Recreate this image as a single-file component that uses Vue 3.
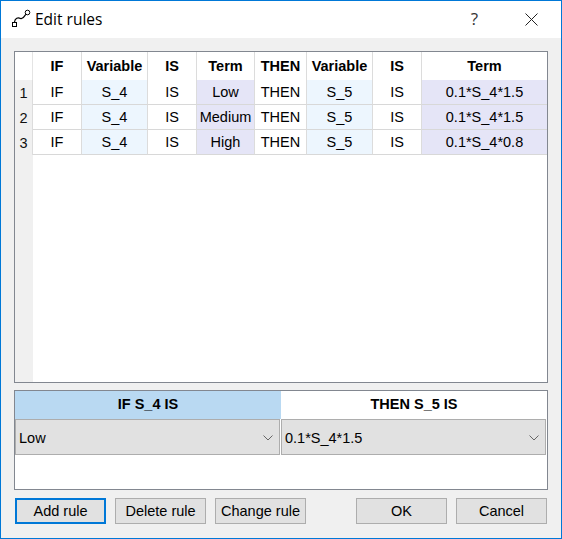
<template>
  <div class="dialog">
    <!-- title bar -->
    <div class="titlebar">
      <svg class="app-icon" width="20" height="20" viewBox="0 0 20 20">
        <rect x="1.500" y="13.500" width="4" height="4" fill="none" stroke="#000" />
        <circle cx="16.500" cy="3.500" r="2.300" fill="none" stroke="#000" />
        <path d="M3.500 13 C4 9 7 8 9.500 9.500 C12 10.500 13 8 14.800 5.200" fill="none" stroke="#000" stroke-width="1.200" />
      </svg>
      <span class="title">Edit rules</span>
      <span class="help">?</span>
      <svg class="close" width="13" height="13" viewBox="0 0 13 13">
        <path d="M0.500 0.500 L12.500 12.500 M12.500 0.500 L0.500 12.500" stroke="#222" fill="none" />
      </svg>
    </div>

    <div class="body">
      <!-- rules table -->
      <div class="rules">
        <div class="row head">
          <div class="corner"></div>
          <div v-for="(h, i) in headers" :key="i" class="cell">{{ h }}</div>
        </div>
        <div v-for="(r, n) in rules" :key="n" class="row item">
          <div class="num">{{ n + 1 }}</div>
          <div class="cell">IF</div>
          <div class="cell var">S_4</div>
          <div class="cell">IS</div>
          <div class="cell term">{{ r.term }}</div>
          <div class="cell">THEN</div>
          <div class="cell var">S_5</div>
          <div class="cell">IS</div>
          <div class="cell term">{{ r.out }}</div>
        </div>
        <div class="rest">
          <div class="rest-side"></div>
        </div>
      </div>

      <!-- editor -->
      <div class="editor">
        <div class="ed-head">
          <div class="ed-if">IF S_4 IS</div>
          <div class="ed-then">THEN S_5 IS</div>
        </div>
        <div class="ed-combos">
          <div class="combo">
            <span>Low</span>
            <svg width="10" height="6" viewBox="0 0 10 6"><path d="M0.500 0.500 L5 5 L9.500 0.500" fill="none" stroke="#666" /></svg>
          </div>
          <div class="combo">
            <span>0.1*S_4*1.5</span>
            <svg width="10" height="6" viewBox="0 0 10 6"><path d="M0.500 0.500 L5 5 L9.500 0.500" fill="none" stroke="#666" /></svg>
          </div>
        </div>
      </div>

      <!-- buttons -->
      <div class="buttons">
        <button class="btn active">Add rule</button>
        <button class="btn">Delete rule</button>
        <button class="btn">Change rule</button>
        <div class="spacer"></div>
        <button class="btn">OK</button>
        <button class="btn">Cancel</button>
      </div>
    </div>
  </div>
</template>

<script setup>
const headers = ['IF', 'Variable', 'IS', 'Term', 'THEN', 'Variable', 'IS', 'Term'];

const rules = [
  { term: 'Low', out: '0.1*S_4*1.5' },
  { term: 'Medium', out: '0.1*S_4*1.5' },
  { term: 'High', out: '0.1*S_4*0.8' },
];
</script>

<style>
html,
body {
  margin: 0;
  padding: 0;
  background: #f0f0f0;
}
</style>

<style scoped>
.dialog {
  box-sizing: border-box;
  width: 562px;
  height: 539px;
  border: 1px solid #0078d7;
  background: #f0f0f0;
  font-family: "Liberation Sans", Arial, sans-serif;
  font-size: 14.500px;
  color: #000;
  display: flex;
  flex-direction: column;
}
.titlebar {
  height: 37px;
  flex: none;
  background: #fff;
  display: flex;
  align-items: center;
  padding-left: 10px;
}
.app-icon {
  flex: none;
  margin-right: 4px;
  margin-bottom: 1px;
}
.title {
  font-family: "Open Sans", "Noto Sans", sans-serif;
  font-size: 15.500px;
  flex: 1;
  padding-bottom: 2px;
}
.help {
  font-family: "Open Sans", sans-serif;
  font-size: 17px;
  color: #333;
  margin-right: 47px;
  padding-bottom: 2px;
}
.close {
  margin-right: 23px;
  margin-bottom: 1px;
}
.body {
  flex: 1;
  padding: 13px;
  display: flex;
  flex-direction: column;
}
.rules {
  box-sizing: border-box;
  height: 332px;
  border: 1px solid #828790;
  background: #fff;
  display: flex;
  flex-direction: column;
}
.row {
  display: grid;
  grid-template-columns: 18px 49px 66px 49px 58px 52px 66px 49px 1fr;
  flex: none;
}
.head {
  height: 28px;
  font-weight: 700;
}
.item {
  height: 25px;
}
.cell {
  box-sizing: border-box;
  display: flex;
  align-items: center;
  justify-content: center;
  border-right: 1px solid #dcdcdc;
  white-space: nowrap;
}
.cell:last-child {
  border-right: none;
}
.item .cell {
  border-bottom: 1px solid #d8d8d8;
}
.head .cell {
  padding-bottom: 1px;
}
.corner {
  border-right: 1px solid #e4e4e4;
}
.num {
  box-sizing: border-box;
  background: #f0f0f0;
  display: flex;
  align-items: center;
  justify-content: center;
  color: #111;
  border-right: 1px solid #dcdcdc;
}
.var {
  background: #edf6fe;
}
.term {
  background: #e5e5f7;
}
.rest {
  flex: 1;
  display: flex;
}
.rest-side {
  width: 18px;
  background: #f0f0f0;
}
.editor {
  box-sizing: border-box;
  height: 100px;
  margin-top: 7px;
  border: 1px solid #828790;
  background: #fff;
}
.ed-head {
  display: grid;
  grid-template-columns: 266px 1fr;
  height: 28px;
  font-weight: 700;
}
.ed-if,
.ed-then {
  display: flex;
  align-items: center;
  justify-content: center;
  padding-bottom: 2px;
}
.ed-if {
  background: #b9d9f2;
}
.ed-combos {
  display: grid;
  grid-template-columns: 265px 1fr;
  gap: 1px;
  padding-right: 1px;
}
.combo {
  box-sizing: border-box;
  height: 36px;
  background: #e1e1e1;
  border: 1px solid #adadad;
  display: flex;
  align-items: center;
  justify-content: space-between;
  padding: 1px 6px 0 3px;
}
.buttons {
  display: flex;
  margin-top: 8px;
  padding-left: 1px;
}
.btn {
  box-sizing: border-box;
  width: 91px;
  height: 26px;
  margin: 0 9px 0 0;
  padding: 0;
  background: #e1e1e1;
  border: 1px solid #adadad;
  border-radius: 0;
  font-family: inherit;
  font-size: 14.500px;
  color: #000;
}
.btn:last-child {
  margin-right: 0;
}
.btn.active {
  border: 2px solid #0078d7;
}
.spacer {
  width: 41px;
}
</style>
